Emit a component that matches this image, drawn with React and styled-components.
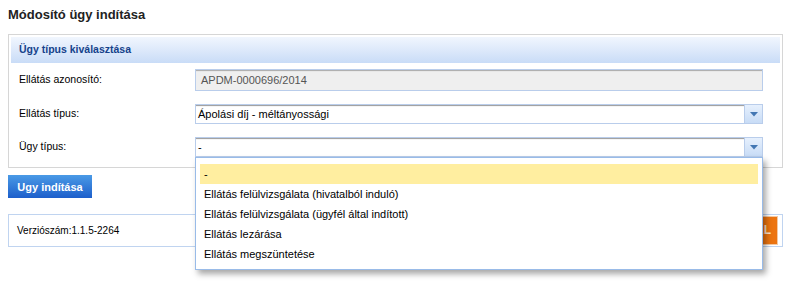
import styled, { createGlobalStyle } from "styled-components";

const GlobalStyle = createGlobalStyle`
	html, body {
		margin: 0;
		background: #fff;
		font-family: "Liberation Sans", Arial, sans-serif;
		font-size: 11px;
		color: #000;
	}
	#root {
		min-height: 305px;
	}
`;

const options = [
	"-",
	"Ellátás felülvizsgálata (hivatalból induló)",
	"Ellátás felülvizsgálata (ügyfél által indított)",
	"Ellátás lezárása",
	"Ellátás megszüntetése",
];

function TriggerArrow() {
	return (
		<svg width="8" height="5" viewBox="0 0 8 5">
			<path d="M0 0 H8 L4 4.5 Z" fill="#4377b3" />
		</svg>
	);
}

function Combo({ value, open }) {
	return (
		<ComboWrap>
			<ComboField>{value}</ComboField>
			<Trigger>
				<TriggerArrow />
			</Trigger>
			{open && (
				<ListBox>
					{options.map((o, i) => (
						<ListItem key={o} $selected={i === 0}>
							{o}
						</ListItem>
					))}
				</ListBox>
			)}
		</ComboWrap>
	);
}

export default function App() {
	return (
		<>
			<GlobalStyle />
			<Page>
				<Title>Módosító ügy indítása</Title>
				<Panel>
					<PanelHeader>Ügy típus kiválasztása</PanelHeader>
					<Form>
						<Label>Ellátás azonosító:</Label>
						<ReadOnlyField>APDM-0000696/2014</ReadOnlyField>
						<Label>Ellátás típus:</Label>
						<Combo value="Ápolási díj - méltányossági" />
						<Label>Ügy típus:</Label>
						<Combo value="-" open />
					</Form>
				</Panel>
				<StartButton>Ugy indítása</StartButton>
				<VersionBox>
					<VersionText>Verziószám:1.1.5-2264</VersionText>
					<OrangeButton>ÜGYFÉLPORTÁL</OrangeButton>
				</VersionBox>
			</Page>
		</>
	);
}

const Page = styled.div`
	padding: 7px 24px 0 8px;
	width: 775px;
`;

const Title = styled.h1`
	margin: 0 0 12px 0;
	font-size: 13px;
	line-height: 15px;
	font-weight: bold;
	color: #222;
`;

const Panel = styled.div`
	border: 1px solid #d6d6d6;
	padding: 2px;
`;

const PanelHeader = styled.div`
	height: 26px;
	line-height: 25px;
	padding-left: 8px;
	font-size: 10.5px;
	font-weight: bold;
	color: #15428b;
	background: linear-gradient(#f1f6fe, #c9dcf7);
`;

const Form = styled.div`
	display: grid;
	grid-template-columns: 176px 568px;
	row-gap: 13px;
	align-items: center;
	padding: 6px 0 8px 8px;
`;

const Label = styled.div`
	color: #000;
	font-size: 10.5px;
	line-height: 14px;
	padding-bottom: 2px;
`;

const ReadOnlyField = styled.div`
	box-sizing: border-box;
	height: 22px;
	line-height: 20px;
	padding-left: 5px;
	border: 1px solid #b9cdeb;
	background: #efefef;
	box-shadow: inset 0 2px 1px -1px #a9a9a9;
	color: #555;
`;

const ComboWrap = styled.div`
	position: relative;
	display: flex;
	height: 20px;
`;

const ComboField = styled.div`
	flex: 1;
	box-sizing: border-box;
	border: 1px solid #b9cdeb;
	border-right: none;
	line-height: 18px;
	padding-left: 2px;
	background: #fff;
	box-shadow: inset 0 2px 1px -1px #9a9a9a;
`;

const Trigger = styled.div`
	width: 19px;
	box-sizing: border-box;
	border: 1px solid #b9cdeb;
	display: flex;
	align-items: center;
	justify-content: center;
	padding-top: 1px;
	background: linear-gradient(#e6f0fd, #c8dcf6);
`;

const ListBox = styled.div`
	position: absolute;
	top: 20px;
	left: 0;
	width: 568px;
	box-sizing: border-box;
	border: 1px solid #99bbe8;
	background: #fff;
	padding: 6px 4px 5px 4px;
	box-shadow: 3px 4px 6px rgba(0, 0, 0, 0.35);
	z-index: 10;
`;

const ListItem = styled.div`
	height: 20px;
	line-height: 20px;
	padding-left: 4px;
	background: ${(p) => (p.$selected ? "#ffeea0" : "transparent")};
`;

const StartButton = styled.button`
	display: block;
	margin-top: 7px;
	width: 84px;
	height: 23px;
	border: none;
	padding: 0;
	font-family: "Liberation Sans", Arial, sans-serif;
	font-size: 11px;
	font-weight: bold;
	color: #fff;
	background: linear-gradient(#4a9ae6, #1d5fcb);
	cursor: pointer;
`;

const VersionBox = styled.div`
	margin-top: 16px;
	height: 33px;
	box-sizing: border-box;
	border: 1px solid #c0d4f0;
	display: flex;
	align-items: center;
	justify-content: space-between;
	padding: 1px 4px 1px 8px;
`;

const VersionText = styled.span`
	font-size: 10px;
`;

const OrangeButton = styled.div`
	height: 29px;
	box-sizing: border-box;
	border: 1px solid #f3c9a3;
	background: #ec7410;
	color: #fde3cc;
	font-weight: bold;
	font-size: 12px;
	line-height: 27px;
	padding: 0 6px;
`;
